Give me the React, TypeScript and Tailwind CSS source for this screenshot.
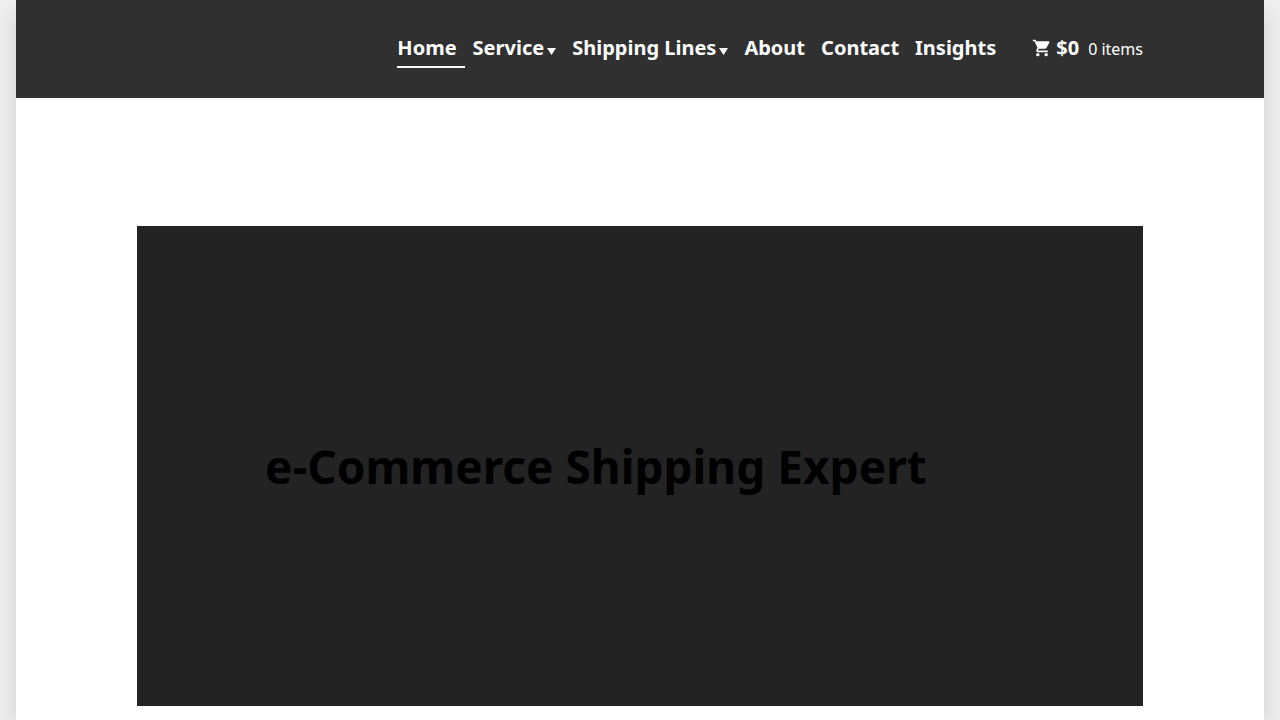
type NavItem = { label: string; active?: boolean; menu?: boolean };

const items: NavItem[] = [
  { label: 'Home', active: true },
  { label: 'Service', menu: true },
  { label: 'Shipping Lines', menu: true },
  { label: 'About' },
  { label: 'Contact' },
  { label: 'Insights' },
];

function CartIcon() {
  return (
    <svg viewBox="0 0 24 24" className="size-5" fill="currentColor" aria-hidden="true">
      <path d="M7 18c-1.1 0-1.99.9-1.99 2S5.9 22 7 22s2-.9 2-2-.9-2-2-2zM1 2v2h2l3.6 7.59-1.35 2.45c-.16.28-.25.61-.25.96 0 1.1.9 2 2 2h12v-2H7.42c-.14 0-.25-.11-.25-.25l.03-.12.9-1.63h7.45c.75 0 1.41-.41 1.75-1.03l3.58-6.49c.08-.14.12-.31.12-.48 0-.55-.45-1-1-1H5.21l-.94-2H1zm16 16c-1.1 0-1.99.9-1.99 2s.89 2 1.99 2 2-.9 2-2-.9-2-2-2z" />
    </svg>
  );
}

function Caret() {
  return (
    <svg viewBox="0 0 9 7" className="mt-1.5 ml-[3px] h-[7px] w-[9px]" fill="currentColor" aria-hidden="true">
      <path d="M0 0h9L4.5 7z" />
    </svg>
  );
}

export default function App() {
  return (
    <div className="min-h-screen bg-[#f1f1f1] px-4 font-['Noto_Sans',sans-serif]">
      <div className="min-h-screen bg-white shadow-[0_10px_25px_rgba(0,0,0,0.15)]">
        <header className="bg-[#303030] px-[121px] text-white">
          <div className="flex h-[98px] items-center justify-end pb-0.5">
            <nav aria-label="Primary" className="flex gap-2 text-xl font-bold">
              {items.map((item) => (
                <a
                  key={item.label}
                  href="#"
                  aria-current={item.active ? 'page' : undefined}
                  className={
                    item.active
                      ? 'flex h-10 items-center border-b-2 border-white pt-0.5 pr-2'
                      : 'flex h-10 items-center border-b-2 border-transparent pt-0.5 pr-2'
                  }
                >
                  {item.label}
                  {item.menu && <Caret />}
                </a>
              ))}
            </nav>
            <a href="#" className="ml-7 flex items-center">
              <CartIcon />
              <span className="ml-1 text-xl font-bold">$0</span>
              <span className="ml-[9px] pt-0.5 text-base">0 items</span>
            </a>
          </div>
        </header>
        <main className="px-[121px] pt-32 pb-3.5">
          <section className="flex h-[480px] items-center bg-[#232323] px-32">
            <h1 className="text-[46px] leading-normal font-bold text-black">e-Commerce Shipping Expert</h1>
          </section>
        </main>
      </div>
    </div>
  );
}
